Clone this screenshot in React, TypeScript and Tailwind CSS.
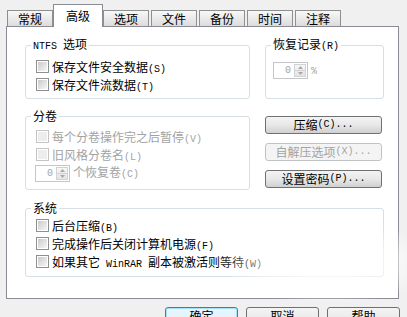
import React from 'react';

// splits a label into ascii runs (drawn in a mono face, like the dialog's bitmap font) and cjk runs
function Txt({ s }: { s: string }) {
  const parts = s.match(/[\x20-\x7e]+|[^\x20-\x7e]+/g) || [];
  return (
    <>
      {parts.map((p, i) =>
        /[\x20-\x7e]/.test(p[0]) ? (
          <span key={i} className="font-['Liberation_Mono',monospace] text-[10px] whitespace-pre">
            {p}
          </span>
        ) : (
          <span key={i}>{p}</span>
        )
      )}
    </>
  );
}

function Box({ off }: { off?: boolean }) {
  return (
    <span
      className={
        off
          ? 'mt-[2px] w-[13px] h-[13px] shrink-0 border border-[#c4c4c4] bg-white p-px'
          : 'mt-[2px] w-[13px] h-[13px] shrink-0 border border-[#8e8f8f] bg-white p-px'
      }
    >
      <span
        className={
          off
            ? 'block w-full h-full bg-[#ededed]'
            : 'block w-full h-full bg-gradient-to-br from-[#cbcbcb] to-[#f6f6f6]'
        }
      />
    </span>
  );
}

function Check({ label, off }: { label: string; off?: boolean }) {
  return (
    <div className="flex items-start h-[18px]">
      <Box off={off} />
      <span
        className={
          off
            ? 'ml-[3px] leading-[18px] whitespace-nowrap text-[#a3a3a3]'
            : 'ml-[3px] leading-[18px] whitespace-nowrap text-black'
        }
      >
        <Txt s={label} />
      </span>
    </div>
  );
}

function Spin() {
  return (
    <div className="flex w-[35px] h-[17px] border border-[#c6c6c6] bg-white p-px">
      <span className="flex-1 text-right pr-[3px] leading-[13px] text-[#a3a3a3] font-['Liberation_Mono',monospace] text-[10px]">
        0
      </span>
      <span className="w-[12px] flex flex-col border border-[#d2d2d2] bg-gradient-to-b from-[#f7f7f7] to-[#e4e4e4]">
        <span className="flex-1 flex items-center justify-center border-b border-[#d2d2d2]">
          <svg width="5" height="3" viewBox="0 0 5 3">
            <path d="M0 3L2.5 0L5 3Z" fill="#a8a8a8" />
          </svg>
        </span>
        <span className="flex-1 flex items-center justify-center">
          <svg width="5" height="3" viewBox="0 0 5 3">
            <path d="M0 0L2.5 3L5 0Z" fill="#a8a8a8" />
          </svg>
        </span>
      </span>
    </div>
  );
}

function Group({
  title,
  className,
  children,
}: {
  title: string;
  className: string;
  children: React.ReactNode;
}) {
  return (
    <fieldset className={'border border-[#d5dfe5] rounded-[3px] px-0 ' + className}>
      <legend className="ml-[5px] px-[2px] leading-[14px] text-black">
        <Txt s={title} />
      </legend>
      {children}
    </fieldset>
  );
}

function SideBtn({ label, off }: { label: string; off?: boolean }) {
  return (
    <div
      className={
        off
          ? 'h-[18px] rounded-[3px] border border-[#c0c4c6] bg-[#f4f4f4] text-[#a3a3a3] flex items-center justify-center leading-[16px]'
          : 'h-[18px] rounded-[3px] border border-[#707070] bg-gradient-to-b from-[#f4f4f4] via-[#e8e8e8] to-[#d0d0d0] text-black flex items-center justify-center leading-[16px]'
      }
    >
      <Txt s={label} />
    </div>
  );
}

const tabs = ['常规', '高级', '选项', '文件', '备份', '时间', '注释'];

export default function App() {
  return (
    <div className="relative w-[407px] h-[317px] overflow-hidden bg-[#f0f0f0] pt-[4px] pl-[6px] font-['Noto_Sans_CJK_SC',sans-serif] text-[12px] leading-[14px]">
      <div className="flex items-end h-[22px] pl-[1px] gap-[2px]">
        {tabs.map((t) =>
          t === '高级' ? (
            <div
              key={t}
              className="relative z-10 -mx-[2px] -mb-px w-[50px] h-[23px] border border-b-0 border-[#898c95] bg-white flex items-start justify-center pt-[4px] text-black"
            >
              {t}
            </div>
          ) : (
            <div
              key={t}
              className="w-[46px] h-[16px] border border-b-0 border-[#8e8f8f] bg-gradient-to-b from-[#f8f8f8] to-[#dcdcdc] flex items-center justify-center text-black"
            >
              {t}
            </div>
          )
        )}
      </div>

      <div className="w-[393px] h-[273px] border border-[#898c95] bg-white pt-[10px] pl-[18px]">
        <div className="flex gap-[15px]">
          <Group title="NTFS 选项" className="w-[225px] pt-[4px] pb-[4px]">
            <div className="pl-[10px]">
              <Check label="保存文件安全数据(S)" />
              <Check label="保存文件流数据(T)" />
            </div>
          </Group>
          <Group title="恢复记录(R)" className="w-[119px] pt-[8px] pb-[19px]">
            <div className="pl-[7px] flex items-center gap-[3px]">
              <Spin />
              <span className="text-[#a3a3a3]">
                <Txt s="%" />
              </span>
            </div>
          </Group>
        </div>

        <div className="flex gap-[15px] mt-[10px]">
          <Group title="分卷" className="w-[225px] pt-[5px] pb-[7px]">
            <div className="pl-[10px]">
              <Check label="每个分卷操作完之后暂停(V)" off />
              <Check label="旧风格分卷名(L)" off />
              <div className="flex items-center h-[18px] -ml-px">
                <Spin />
                <span className="ml-[3px] text-[#a3a3a3] whitespace-nowrap">
                  <Txt s="个恢复卷(C)" />
                </span>
              </div>
            </div>
          </Group>
          <div className="w-[117px] pt-[7px] flex flex-col gap-[9px]">
            <SideBtn label="压缩(C)..." />
            <SideBtn label="自解压选项(X)..." off />
            <SideBtn label="设置密码(P)..." />
          </div>
        </div>

        <Group title="系统" className="w-[359px] mt-[11px] pt-[2px] pb-[5px]">
          <div className="pl-[10px]">
            <Check label="后台压缩(B)" />
            <Check label="完成操作后关闭计算机电源(F)" />
            <Check label="如果其它 WinRAR 副本被激活则等待(W)" />
          </div>
        </Group>
      </div>

      <div className="flex justify-end gap-[8px] pr-[7px] mt-[8px]">
        <div className="w-[73px] h-[23px] rounded-[3px] border border-[#3c7fb1] shadow-[inset_0_0_0_1px_#a8e0f8] bg-gradient-to-b from-[#eaf6fd] to-[#d9f0fc] flex justify-center pt-[1px]">
          确定
        </div>
        <div className="w-[73px] h-[23px] rounded-[3px] border border-[#707070] bg-gradient-to-b from-[#f4f4f4] to-[#e2e2e2] flex justify-center pt-[1px]">
          取消
        </div>
        <div className="w-[73px] h-[23px] rounded-[3px] border border-[#707070] bg-gradient-to-b from-[#f4f4f4] to-[#e2e2e2] flex justify-center pt-[1px]">
          帮助
        </div>
      </div>

      <div className="pointer-events-none absolute left-[215px] top-[220px] w-[225px] h-[84px] bg-[radial-gradient(closest-side,rgba(255,255,255,0.97),rgba(255,255,255,0.6)_55%,rgba(255,255,255,0))]" />
    </div>
  );
}
